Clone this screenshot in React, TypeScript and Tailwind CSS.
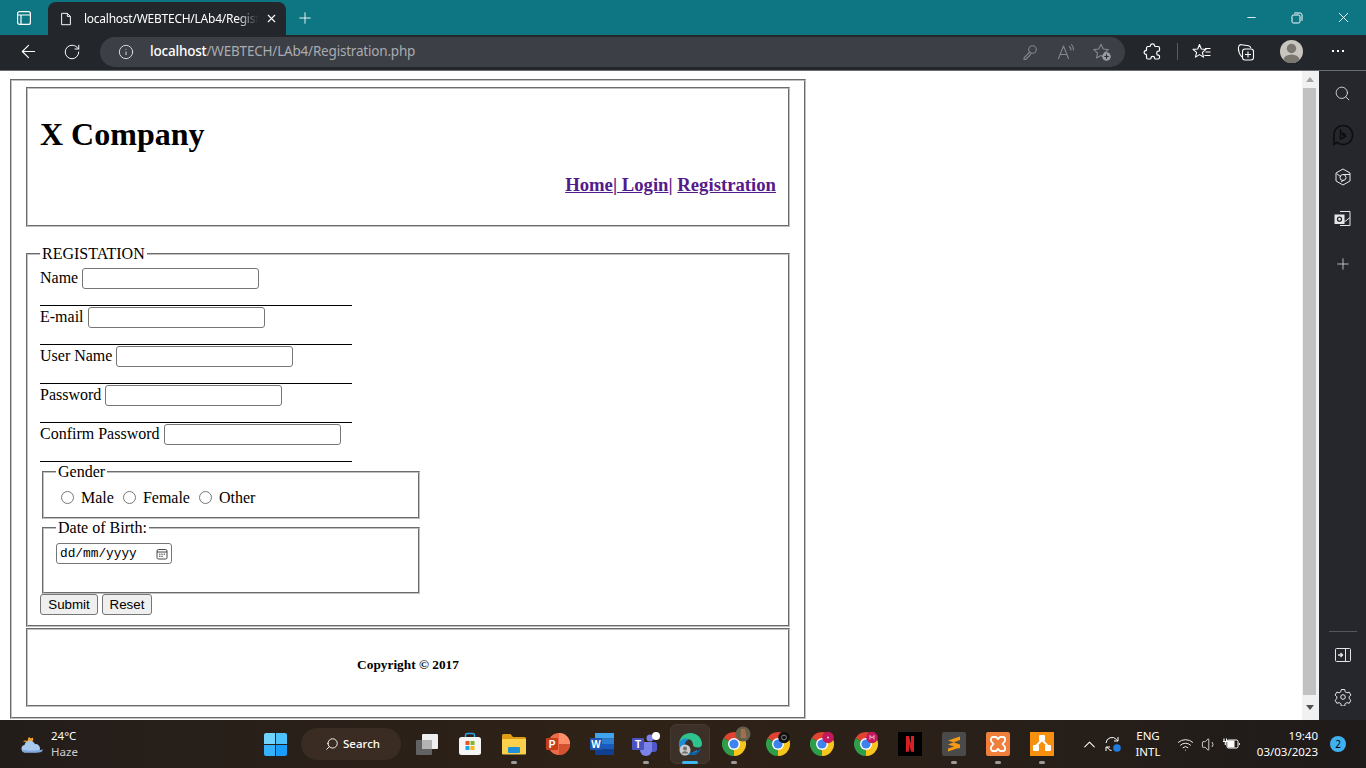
import React from 'react';
import { ArrowLeft, RotateCw, Info, Plus, X, Minus, Search, ChevronUp, Volume1, Wifi } from 'lucide-react';

const Divider = () => <div className="mt-4 mb-px h-px w-[312px] bg-black" />;

const Field = ({ label }: { label: string }) => (
  <>
    <div className="flex h-[21px] items-center gap-1">
      <span className="pb-[2px]">{label}</span>
      <input type="text" className="h-[21px] w-[177px] rounded-[3px] border border-[#767676] bg-white" />
    </div>
    <Divider />
  </>
);

const Radio = ({ label }: { label: string }) => (
  <label className="flex items-center">
    <input type="radio" name="gender" className="mr-[7px] ml-[5px] h-[13px] w-[13px]" />
    <span>{label}</span>
  </label>
);

const groove = 'border-2 border-[#c0c0c0] [border-style:groove]';

const TitleIcon = ({ children }: { children: React.ReactNode }) => (
  <svg viewBox="0 0 20 20" className="h-5 w-5" fill="none" stroke="currentColor" strokeWidth="1.1" strokeLinejoin="round" strokeLinecap="round">
    {children}
  </svg>
);

const Chrome = ({ badge }: { badge?: React.ReactNode }) => (
  <svg viewBox="0 0 24 24" className="h-6 w-6 overflow-visible">
    <path d="M12 12 1.6 6A12 12 0 0 1 22.4 6Z" fill="#e0432f" />
    <path d="M12 12 1.6 6A12 12 0 0 0 12 24Z" fill="#2f9e4b" />
    <path d="M12 12 22.4 6A12 12 0 0 1 12 24Z" fill="#f8c51c" />
    <circle cx="12" cy="12" r="6" fill="#fff" />
    <circle cx="12" cy="12" r="4.6" fill="#3d82ee" />
    {badge}
  </svg>
);

const Dock = ({ children, running, active }: { children: React.ReactNode; running?: boolean; active?: boolean }) => (
  <div className="relative flex h-10 w-11 items-center justify-center">
    {active && <div className="absolute top-0 left-[2px] h-10 w-10 rounded-md border border-[#453a30] bg-[#3c3128]" />}
    <div className="relative flex">{children}</div>
    {running && <div className="absolute bottom-0 left-[19px] h-[3px] w-[6px] rounded-full bg-[#9b9b9b]" />}
    {active && <div className="absolute bottom-0 left-[14px] h-[3px] w-4 rounded-full bg-[#3fb6f2]" />}
  </div>
);

export default function App() {
  return (
    <div className="flex h-[768px] w-[1366px] flex-col overflow-hidden bg-white font-['Noto_Sans',sans-serif]">
      {/* tab strip */}
      <div className="flex h-[35px] items-end bg-[#0e7583] text-white">
        <div className="flex h-[35px] w-12 items-center justify-center">
          <svg viewBox="0 0 16 16" className="h-4 w-4" fill="none" stroke="currentColor" strokeWidth="1.2">
            <rect x="1.6" y="1.6" width="12.8" height="12.8" rx="2" />
            <path d="M1.6 5h12.8M5 5v9.4" />
          </svg>
        </div>
        <div className="flex h-[33px] w-[238px] items-center rounded-t-lg bg-[#23262b] pl-[11px]">
          <svg viewBox="0 0 16 16" className="h-[18px] w-[14px]" fill="none" stroke="currentColor" strokeWidth="1.1">
            <path d="M3 1.5h6.5L13 5v9.5H3ZM9.5 1.5V5H13" strokeLinejoin="round" />
          </svg>
          <span className="ml-[11px] w-[174px] text-[12px] tracking-[-0.25px] whitespace-nowrap [mask-image:linear-gradient(90deg,#000_88%,transparent_100%)]">localhost/WEBTECH/LAb4/Regist</span>
          <X size={13} className="ml-[7px]" />
        </div>
        <div className="flex h-[35px] w-[38px] items-center justify-center">
          <Plus size={18} strokeWidth={1.2} />
        </div>
        <div className="flex-1" />
        <div className="flex h-[35px] items-center">
          <div className="flex w-[46px] justify-center"><Minus size={13} strokeWidth={1.6} /></div>
          <div className="flex w-[46px] justify-center">
            <svg viewBox="0 0 12 12" className="h-3 w-3" fill="none" stroke="currentColor" strokeWidth="1">
              <rect x="1" y="3" width="8" height="8" rx="1.5" />
              <path d="M3.2 1h6a2 2 0 0 1 1.8 1.8v6" />
            </svg>
          </div>
          <div className="flex w-[46px] justify-center"><X size={17} strokeWidth={1.3} /></div>
        </div>
      </div>

      {/* toolbar */}
      <div className="flex h-[35px] items-center bg-[#23262b] pb-[2px] text-white">
        <div className="flex w-[50px] shrink-0 justify-center pl-[6px]"><ArrowLeft size={21} strokeWidth={1.3} /></div>
        <div className="flex w-[50px] shrink-0 justify-center pr-[6px]"><RotateCw size={18} strokeWidth={1.3} /></div>
        <div className="flex h-[30px] w-[1025px] shrink-0 items-center rounded-full bg-[#3c3f46] pl-[18px]">
          <Info size={16} strokeWidth={1.3} className="text-[#efefef]" />
          <span className="ml-[16px] text-[13.5px] tracking-[-0.2px] text-[#a9abae]">
            <span className="font-medium text-white">localhost</span>/WEBTECH/LAb4/Registration.php
          </span>
          <div className="flex-1" />
          <div className="flex items-center gap-4 pr-[13px] text-[#85878b]">
            <TitleIcon>
              <circle cx="12.5" cy="7.5" r="3.8" />
              <path d="M9.8 10 4 15.8v1.6h2l1-1v-1.2h1.3l2.6-3.4" />
            </TitleIcon>
            <TitleIcon>
              <path d="M2.5 16.5 7.5 4l5 12.5M4.3 12.5h6.4M13.5 4.5a5 5 0 0 1 1.5 3.5M15.5 2.5a8 8 0 0 1 2 5.5" />
            </TitleIcon>
            <svg viewBox="0 0 20 20" className="h-5 w-5">
              <path d="M9 2.2 11.2 7l5.1.6-3.8 3.4 1 5-4.5-2.6-4.5 2.6 1-5L1.700 7.600 6.800 7Z" fill="none" stroke="currentColor" strokeWidth="1.100" strokeLinejoin="round" />
              <circle cx="14.500" cy="14.500" r="4.300" fill="#9a9ca0" />
              <path d="M14.500 12.300v4.400M12.300 14.500h4.400" stroke="#2c2e33" strokeWidth="1.100" />
            </svg>
          </div>
        </div>
        <div className="flex w-[52px] shrink-0 justify-center pl-[4px]">
          <svg viewBox="0 0 20 20" className="h-5 w-5" fill="none" stroke="currentColor" strokeWidth="1.200" strokeLinejoin="round">
            <path d="M7.500 3.500c0-2.200 4-2.200 4 0 0 .8.500 1 1.200 1h2.300c1 0 1.500.6 1.500 1.500v2.200c0 .7-.5 1-1.200 1-2.200 0-2.200 4 0 4 .7 0 1.200.3 1.200 1v1.300c0 1-.6 1.500-1.500 1.500h-2.400c-.7 0-1-.5-1-1.100 0-2-3.600-2-3.600 0 0 .6-.4 1.100-1 1.100H5c-1 0-1.500-.6-1.500-1.500v-2.200c0-.7-.5-1.100-1.100-1.100-1.700-.5-1.700-3 0-3.500.6 0 1.100-.4 1.100-1V6c0-1 .6-1.500 1.500-1.500h1.300c.7 0 1.200-.3 1.200-1Z" />
          </svg>
        </div>
        <div className="h-[17px] w-px shrink-0 bg-[#5a5c60]" />
        <div className="ml-[14px] flex w-[20px] shrink-0 justify-center">
          <svg viewBox="0 0 20 20" className="h-5 w-5" fill="none" stroke="currentColor" strokeWidth="1.100" strokeLinejoin="round">
            <path d="M7.500 2.500 9.300 7l4.700.4-3.600 3 1.100 4.700-4-2.500-4 2.500 1.100-4.700-3.600-3L5.700 7ZM13 6.500h5.500M13.500 10h5M12.500 13.500h6" />
          </svg>
        </div>
        <div className="ml-[24px] flex w-[20px] shrink-0 justify-center">
          <svg viewBox="0 0 20 20" className="h-5 w-5" fill="none" stroke="currentColor" strokeWidth="1.100" strokeLinejoin="round">
            <path d="M6 15C3.500 13 2 8 2.500 5c.3-1.500 1.500-2.500 3-2.300l7 1c1.200.2 2 1 2.300 2.300" />
            <rect x="6.500" y="7" width="11" height="11" rx="2.500" fill="#23262b" />
            <path d="M12 9.500v6M9 12.500h6" />
          </svg>
        </div>
        <div className="ml-[24px] flex h-[23px] w-[23px] shrink-0 items-center justify-center overflow-hidden rounded-full bg-[#c9c6c0]">
          <svg viewBox="0 0 23 23" className="h-[23px] w-[23px]">
            <circle cx="11.500" cy="8.500" r="4.700" fill="#7a7670" />
            <ellipse cx="11.500" cy="20" rx="8" ry="5.500" fill="#7a7670" />
          </svg>
        </div>
        <div className="ml-[12px] flex w-[46px] shrink-0 justify-center gap-[3px] pb-px">
          <div className="h-[2px] w-[2px] bg-white" />
          <div className="h-[2px] w-[2px] bg-white" />
          <div className="h-[2px] w-[2px] bg-white" />
        </div>
      </div>
      <div className="h-px bg-[#6b6d70]" />

      <div className="flex min-h-0 flex-1">
        {/* page */}
        <div className="flex-1 overflow-hidden font-['Liberation_Serif',serif] text-[16px] text-black">
          <div className={`mt-2 ml-[10px] h-[640px] w-[796px] px-[14px] pt-[6px] ${groove}`}>
            <div className={`h-[140px] w-[764px] px-3 ${groove}`}>
              <h1 className="mt-[27px] text-[32px] leading-[37px] font-bold">X Company</h1>
              <h3 className="mt-[21px] text-right text-[18.72px] leading-[21px] font-bold text-[#551a8b]">
                <a className="underline">Home</a>|<a className="underline"> Login</a>| <a className="underline">Registration</a>
              </h3>
            </div>
            <fieldset className={`mt-[18px] h-[382px] w-[764px] px-3 ${groove}`}>
              <legend className="px-0.5 leading-[18px]">REGISTATION</legend>
              <div className="pt-[5px]">
                <Field label="Name" />
                <Field label="E-mail" />
                <Field label="User Name" />
                <Field label="Password" />
                <Field label="Confirm Password" />
                <fieldset className={`mx-0.5 h-[56px] w-[378px] px-3 ${groove}`}>
                  <legend className="px-0.5 leading-[18px]">Gender</legend>
                  <div className="flex h-[21px] items-center gap-1 pt-[12px]">
                    <Radio label="Male" />
                    <Radio label="Female" />
                    <Radio label="Other" />
                  </div>
                </fieldset>
                <fieldset className={`mx-0.5 h-[75px] w-[378px] px-3 ${groove}`}>
                  <legend className="px-0.5 leading-[18px]">Date of Birth:</legend>
                  <div className="mt-[6px] flex h-[21px] w-[116px] items-center rounded-[3px] border border-[#767676] px-[3px] pt-[2px] font-['Liberation_Mono',monospace] text-[12.800px] leading-none">
                    <span>dd/mm/yyyy</span>
                    <svg viewBox="0 0 12 12" className="ml-auto h-3 w-3 -translate-y-px" fill="none" stroke="#333" strokeWidth="0.900">
                      <rect x="1" y="1.500" width="10" height="9.500" rx="1.500" />
                      <path d="M1 4h10M3 6.200h1.500M5.300 6.200h1.500M7.600 6.200h1.500M3 8.300h1.500M5.300 8.300h1.500" />
                    </svg>
                  </div>
                </fieldset>
                <div className="flex gap-1 font-['Liberation_Sans',sans-serif] text-[13.330px]">
                  <button className="h-[21px] w-[58px] rounded-[3px] border border-[#767676] bg-[#efefef]">Submit</button>
                  <button className="h-[21px] w-[50px] rounded-[3px] border border-[#767676] bg-[#efefef]">Reset</button>
                </div>
              </div>
            </fieldset>
            <div className={`mt-px flex h-[79px] w-[764px] items-center justify-center pb-[6px] text-[13.330px] font-bold ${groove}`}>
              Copyright © 2017
            </div>
          </div>
        </div>

        {/* scrollbar */}
        <div className="flex w-[17px] flex-col items-center bg-[#f1f1f1] pr-[2px] text-[#505050]">
          <div className="flex h-[17px] items-center justify-center">
            <div className="h-0 w-0 border-x-[4px] border-b-[5px] border-x-transparent border-b-[#a3a3a3]" />
          </div>
          <div className="h-[607px] w-[13px] bg-[#c1c1c1]" />
          <div className="flex h-[25px] items-center justify-center">
            <div className="h-0 w-0 border-x-[4px] border-t-[5px] border-x-transparent border-t-[#505050]" />
          </div>
        </div>

        {/* sidebar */}
        <div className="flex w-[47px] flex-col items-center bg-[#25272c] text-[#e6e6e6]">
          <div className="mt-[14px]"><Search size={17} strokeWidth={1.200} /></div>
          <svg viewBox="0 0 22 22" className="mt-[22px] h-[22px] w-[22px]" fill="none">
            <path d="M11 1.500a9.500 9.500 0 1 1-6 16.800L2 20.500V11A9 9 0 0 1 11 1.500Z" stroke="#0d0e10" strokeWidth="1.600" />
            <path d="M8.500 5v10l5-2.500-2.500-1.500-.8-2 3.800 1.800" stroke="#0d0e10" strokeWidth="1.400" />
          </svg>
          <svg viewBox="0 0 18 18" className="mt-[22px] h-[18px] w-[18px]" fill="none" stroke="currentColor" strokeWidth="1">
            <path d="M9 1 16 5v8l-7 4-7-4V5Z" strokeLinejoin="round" />
            <circle cx="9" cy="9.500" r="3" />
            <path d="M2.500 5.500 7 9M16 6.500H9M7 14l3-2" />
          </svg>
          <svg viewBox="0 0 18 18" className="mt-[24px] h-[18px] w-[18px]" fill="none" stroke="currentColor" strokeWidth="1">
            <path d="M6 1.500h10v14H6" />
            <path d="M6 7.500l5 4 5-4" />
            <rect x="1" y="5" width="9" height="8.500" fill="#e6e6e6" />
            <circle cx="5.500" cy="9.200" r="2" stroke="#25272c" strokeWidth="1.300" />
          </svg>
          <Plus size={18} strokeWidth={1} className="mt-[27px]" />
          <div className="flex-1" />
          <div className="h-px w-[28px] bg-[#55575b]" />
          <svg viewBox="0 0 16 16" className="mt-[15px] h-4 w-4" fill="none" stroke="currentColor" strokeWidth="1">
            <rect x="0.500" y="1.500" width="15" height="13" rx="1" />
            <path d="M10.500 1.500v13" />
            <path d="M3 8h4.500M5.500 6l2 2-2 2" strokeWidth="1.300" />
          </svg>
          <svg viewBox="0 0 18 18" className="mt-[25px] mb-[14px] h-[18px] w-[18px]" fill="none" stroke="currentColor" strokeWidth="1">
            <path d="M7.300 1.500h3.400l.5 2.300 1.700 1 2.300-.7 1.700 3-1.700 1.600v2l1.700 1.600-1.700 3-2.300-.7-1.700 1-.5 2.400H7.300l-.5-2.400-1.700-1-2.300.7-1.700-3 1.700-1.600v-2L1.100 7.100l1.700-3 2.300.7 1.700-1Z" strokeLinejoin="round" />
            <circle cx="9" cy="9" r="2.300" />
          </svg>
        </div>
      </div>

      {/* taskbar */}
      <div className="flex h-12 items-center bg-[linear-gradient(90deg,#231d1a,#2f2217_45%,#2c2118_60%,#1f1b1a)] text-white">
        <svg viewBox="0 0 24 20" className="ml-5 h-5 w-6 shrink-0">
          <path d="M9 3a2.500 2.500 0 0 0 4 .500 4 4 0 0 1-2.500 5L3 7.500C4 6.500 6 6 7.500 7 8 5 8 4 9 3Z" fill="#f0a428" />
          <path d="M5 18.500a3.800 3.800 0 0 1-.500-7.500 5.500 5.500 0 0 1 10.500-.800 4.200 4.200 0 0 1 5 4.300 4 4 0 0 1-4 4Z" fill="#a9c8ee" />
          <path d="M2 15.500c4 1.500 14 1.500 21 0-.5 2-2 3-4 3H5c-1.500 0-2.500-1-3-3Z" fill="#7fa6dd" />
        </svg>
        <div className="ml-[7px] w-[50px] shrink-0 text-[11.500px] leading-[16px]">
          <div>24°C</div>
          <div className="text-[#cfcdca]">Haze</div>
        </div>
        <div className="ml-[163px] grid h-[23px] w-[23px] shrink-0 grid-cols-2 gap-px">
          <div className="rounded-tl-[2px] bg-[#6fd3fb]" />
          <div className="rounded-tr-[2px] bg-[#4dc1fb]" />
          <div className="rounded-bl-[2px] bg-[#34b2fb]" />
          <div className="rounded-br-[2px] bg-[#189dfa]" />
        </div>
        <div className="ml-[14px] flex h-8 w-[100px] shrink-0 items-center rounded-full bg-[#3a2c22] pl-[24px] text-[11.500px] font-medium">
          <Search size={14} strokeWidth={1.600} className="-scale-x-100" />
          <span className="ml-[4px]">Search</span>
        </div>
        <div className="ml-[4px] -mr-px flex w-11 shrink-0 items-center justify-center">
          <svg viewBox="0 0 24 24" className="h-6 w-6">
            <rect x="1" y="8" width="16" height="15" rx="1" fill="#626262" />
            <rect x="7" y="2" width="16" height="15" rx="1" fill="#efefef" />
            <rect x="7" y="8" width="10" height="9" fill="#b3b3b3" />
          </svg>
        </div>
        <Dock>
          <svg viewBox="0 0 24 24" className="h-6 w-6">
            <path d="M7.500 5V3.500A2 2 0 0 1 9.500 1.500h5a2 2 0 0 1 2 2V5" fill="none" stroke="#2aa5e8" strokeWidth="1.500" />
            <rect x="1" y="5" width="22" height="18" rx="2.500" fill="#f5f5f5" />
            <rect x="7.500" y="9" width="4" height="4" fill="#e8532a" />
            <rect x="12.500" y="9" width="4" height="4" fill="#7db92b" />
            <rect x="7.500" y="14" width="4" height="4" fill="#1ea4e9" />
            <rect x="12.500" y="14" width="4" height="4" fill="#fab811" />
          </svg>
        </Dock>
        <Dock running>
          <svg viewBox="0 0 24 24" className="h-6 w-6">
            <path d="M0 3.500A1.500 1.500 0 0 1 1.500 2h7L11 5h11.500A1.500 1.500 0 0 1 24 6.500V10H0Z" fill="#e09c14" />
            <path d="M0 7h24v14.500a1 1 0 0 1-1 1H1a1 1 0 0 1-1-1Z" fill="#fbd14b" />
            <rect x="6" y="15" width="12" height="6" rx="1" fill="#1e8fd8" />
          </svg>
        </Dock>
        <Dock>
          <svg viewBox="0 0 24 24" className="h-6 w-6">
            <circle cx="13" cy="12" r="11" fill="#ed6c47" />
            <path d="M13 12V1a11 11 0 0 1 11 11Z" fill="#ff8f6b" />
            <path d="M13 12h11a11 11 0 0 1-11 11Z" fill="#d35230" />
            <rect x="0" y="6" width="12" height="12" rx="1" fill="#c43e1c" />
            <text x="6" y="15.500" textAnchor="middle" fontSize="10" fontWeight="700" fill="#fff" fontFamily="Liberation Sans">P</text>
          </svg>
        </Dock>
        <Dock>
          <svg viewBox="0 0 24 24" className="h-6 w-6">
            <rect x="5" y="1" width="19" height="5.500" fill="#41a5ee" />
            <rect x="5" y="6.500" width="19" height="5.500" fill="#2b7cd3" />
            <rect x="5" y="12" width="19" height="5.500" fill="#185abd" />
            <rect x="5" y="17.500" width="19" height="5.500" fill="#103f91" />
            <rect x="0" y="6" width="12" height="12" rx="1" fill="#1e55b0" />
            <text x="6" y="15.500" textAnchor="middle" fontSize="10" fontWeight="700" fill="#fff" fontFamily="Liberation Sans">W</text>
          </svg>
        </Dock>
        <Dock running>
          <svg viewBox="0 0 28 24" className="h-6 w-7">
            <circle cx="18" cy="6" r="3.500" fill="#7b83eb" />
            <circle cx="24" cy="4" r="4" fill="#fff" />
            <rect x="13" y="10" width="12" height="10" rx="3" fill="#5059c9" />
            <path d="M8 10h12v8a6 6 0 0 1-12 0Z" fill="#7b83eb" />
            <rect x="0" y="6" width="12" height="12" rx="1" fill="#4b53bc" />
            <text x="6" y="15.500" textAnchor="middle" fontSize="10" fontWeight="700" fill="#fff" fontFamily="Liberation Sans">T</text>
          </svg>
        </Dock>
        <Dock active>
          <svg viewBox="0 0 24 24" className="h-6 w-6">
            <path d="M1 11C2 4.500 7 1 12.500 1 19 1 24 6 24 12c0 2-1.500 3.500-4 3.500-3 0-5-1-5-2.500 0-5-4.500-7-7.500-5.500C4.500 8.500 2 9.500 1 11Z" fill="#2fc38e" />
            <path d="M1 11c2-4 7-5.500 10-3.500-3.500 1-5 4.500-4 8 1 3 3.500 5 6.500 5.500L19 18c.5 2 .5 3-.5 4-2 1-4 1-6.500 1C5 23 0 18 1 11Z" fill="#1d8ad6" />
            <path d="M7 17c2 3 7 5 11 3l5-4c-1 3-3 7-10 7-2 0-4-1-6-6Z" fill="#0c5f9e" />
            <circle cx="7" cy="18" r="5.500" fill="#c9c9c9" />
            <circle cx="7" cy="16.500" r="2" fill="#6f6f6f" />
            <path d="M3.500 21.500a3.800 3.800 0 0 1 7 0Z" fill="#6f6f6f" />
          </svg>
        </Dock>
        <Dock running>
          <Chrome badge={<><circle cx="21" cy="2" r="7.500" fill="#65604c" /><path d="M19 -3h4l1.500 9h-6Z" fill="#a0714a" /></>} />
        </Dock>
        <Dock>
          <Chrome badge={<><circle cx="18" cy="5.500" r="5.800" fill="#111" /><circle cx="18" cy="5.500" r="2.400" fill="none" stroke="#888" strokeWidth="1" /></>} />
        </Dock>
        <Dock>
          <Chrome badge={<><circle cx="18" cy="5.500" r="5.800" fill="#c4185c" /><circle cx="18" cy="5.500" r="1" fill="#f5d0df" /></>} />
        </Dock>
        <Dock>
          <Chrome badge={<><circle cx="18" cy="5.500" r="5.800" fill="#c4185c" /><path d="M16 7.500v-4l2 2.500 2-2.500v4" fill="none" stroke="#f5d0df" strokeWidth="0.900" /></>} />
        </Dock>
        <Dock>
          <svg viewBox="0 0 24 24" className="h-6 w-6">
            <rect width="24" height="24" fill="#000" />
            <path d="M8 4h3l2 8V4h3v16l-3-.5-2-7.500v7.500l-3 .5Z" fill="#d81f26" />
          </svg>
        </Dock>
        <Dock running>
          <svg viewBox="0 0 24 24" className="h-6 w-6">
            <rect width="24" height="24" rx="2" fill="#4a4a4a" />
            <path d="M18 4.500 6 8.500v4l12 4v-4L6 8.500M18 12.500 6 16.500v3l12-4M6 8.500l12-4v3.500L6 12.500Z" fill="#f59a12" />
          </svg>
        </Dock>
        <Dock running>
          <svg viewBox="0 0 24 24" className="h-6 w-6">
            <rect width="24" height="24" rx="2" fill="#f07f3c" />
            <path d="M7 5h3l2 2 2-2h3a2 2 0 0 1 2 2v2l-2.500 3 2.500 3v2a2 2 0 0 1-2 2h-3l-2-2-2 2H7a2 2 0 0 1-2-2v-2l2.500-3L5 9V7a2 2 0 0 1 2-2Z" fill="none" stroke="#fff" strokeWidth="1.800" strokeLinejoin="round" />
          </svg>
        </Dock>
        <Dock running>
          <svg viewBox="0 0 24 24" className="h-6 w-6">
            <rect width="24" height="24" fill="#f7900f" />
            <rect x="9" y="3" width="6" height="6" rx="1" fill="#fff" />
            <rect x="3" y="13" width="6" height="6" rx="1" fill="#fff" />
            <rect x="15" y="13" width="6" height="6" rx="1" fill="#fff" />
            <path d="M12 8 6 14M12 8l6 6" stroke="#fff" strokeWidth="2" />
          </svg>
        </Dock>

        <ChevronUp size={19} strokeWidth={1.300} className="ml-[16px] shrink-0" />
        <svg viewBox="0 0 18 18" className="ml-[5px] h-[18px] w-[18px] shrink-0" fill="none" stroke="currentColor" strokeWidth="1">
          <path d="M2 8a6 6 0 0 1 10.500-3.500L14 6M14 2v4h-4M3 12l1.500 2a5 5 0 0 0 3 1.500M2 16v-4h4" />
          <circle cx="13" cy="13" r="3.800" fill="#1f7fe0" stroke="none" />
        </svg>
        <div className="ml-[8px] w-[36px] shrink-0 text-center text-[11.500px] leading-[16px]">
          <div>ENG</div>
          <div>INTL</div>
        </div>
        <Wifi size={17} strokeWidth={1.300} className="ml-[11px] shrink-0" />
        <Volume1 size={17} strokeWidth={1.100} className="ml-[7px] shrink-0" />
        <svg viewBox="0 0 18 14" className="ml-[4px] h-[14px] w-[18px] shrink-0" fill="none" stroke="currentColor">
          <rect x="5" y="3" width="11" height="8" rx="1.500" strokeWidth="1" />
          <rect x="5.500" y="3.500" width="7" height="7" fill="currentColor" stroke="none" />
          <path d="M17.300 6v2" strokeWidth="1" />
          <path d="M1 4.500h5M2 1.500v3M4.500 1.500v3M3.300 5v3" strokeWidth="1.100" />
        </svg>
        <div className="ml-[16px] w-[62px] shrink-0 text-right text-[11.500px] leading-[16px] whitespace-nowrap">
          <div>19:40</div>
          <div>03/03/2023</div>
        </div>
        <div className="ml-[12px] flex h-4 w-4 shrink-0 items-center justify-center rounded-full bg-[#3fb1f0] text-[10px] text-black">2</div>
      </div>
    </div>
  );
}
